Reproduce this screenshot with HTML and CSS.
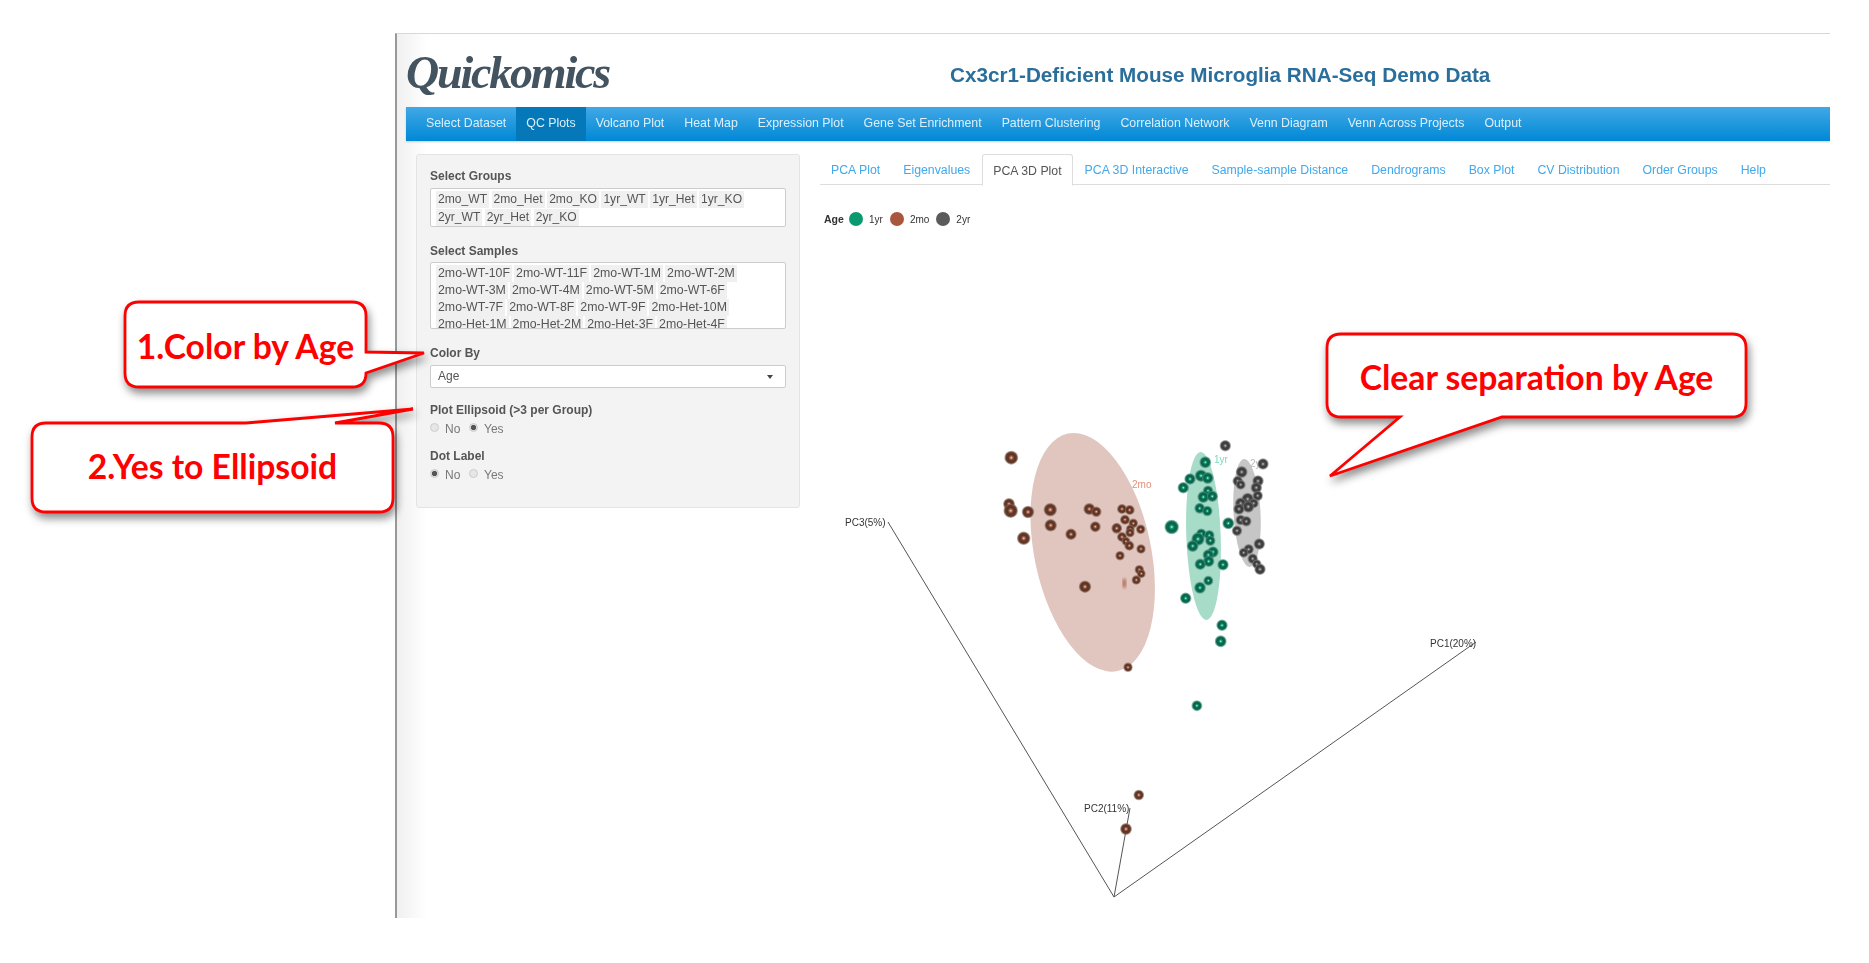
FILE: index.html
```html
<!DOCTYPE html>
<html lang="en">
<head>
  <meta charset="UTF-8" />
  <title>Quickomics</title>
  <link rel="stylesheet" href="styles.css">
</head>
<body>
  <div class="app">
    <header class="top">
      <div class="logo">Quickomics</div>
      <h1 class="title">Cx3cr1-Deficient Mouse Microglia RNA-Seq Demo Data</h1>
    </header>
    <nav class="navbar">
      <a>Select Dataset</a>
      <a class="on">QC Plots</a>
      <a>Volcano Plot</a>
      <a>Heat Map</a>
      <a>Expression Plot</a>
      <a>Gene Set Enrichment</a>
      <a>Pattern Clustering</a>
      <a>Correlation Network</a>
      <a>Venn Diagram</a>
      <a>Venn Across Projects</a>
      <a>Output</a>
    </nav>
    <div class="content">
      <aside class="panel">
        <label class="lbl first">Select Groups</label>
        <div class="multi groups">
          <span>2mo_WT</span><span>2mo_Het</span><span>2mo_KO</span><span>1yr_WT</span><span>1yr_Het</span><span>1yr_KO</span>
          <span>2yr_WT</span><span>2yr_Het</span><span>2yr_KO</span>
        </div>
        <label class="lbl samples-lbl">Select Samples</label>
        <div class="multi samples">
          <span>2mo-WT-10F</span><span>2mo-WT-11F</span><span>2mo-WT-1M</span><span>2mo-WT-2M</span>
          <span>2mo-WT-3M</span><span>2mo-WT-4M</span><span>2mo-WT-5M</span><span>2mo-WT-6F</span>
          <span>2mo-WT-7F</span><span>2mo-WT-8F</span><span>2mo-WT-9F</span><span>2mo-Het-10M</span>
          <span>2mo-Het-1M</span><span>2mo-Het-2M</span><span>2mo-Het-3F</span><span>2mo-Het-4F</span>
        </div>
        <label class="lbl color-lbl">Color By</label>
        <div class="select">Age<i class="caret"></i></div>
        <label class="lbl ell-lbl">Plot Ellipsoid (&gt;3 per Group)</label>
        <div class="radios"><i class="radio"></i><span>No</span><i class="radio sel"></i><span>Yes</span></div>
        <label class="lbl dot-lbl">Dot Label</label>
        <div class="radios"><i class="radio sel"></i><span>No</span><i class="radio"></i><span>Yes</span></div>
      </aside>
      <main class="main">
        <ul class="tabs">
          <li>PCA Plot</li>
          <li>Eigenvalues</li>
          <li class="active">PCA 3D Plot</li>
          <li>PCA 3D Interactive</li>
          <li>Sample-sample Distance</li>
          <li>Dendrograms</li>
          <li>Box Plot</li>
          <li>CV Distribution</li>
          <li>Order Groups</li>
          <li>Help</li>
        </ul>
        <div class="legend">
          <b>Age</b>
          <i class="dot green"></i><span>1yr</span>
          <i class="dot brown"></i><span>2mo</span>
          <i class="dot gray"></i><span>2yr</span>
        </div>
        <svg class="plot" viewBox="820 226 1010 692" width="1010" height="692">
          <defs>
            <radialGradient id="sb"><stop offset="0" stop-color="#f6dccf"/><stop offset=".22" stop-color="#a8674c"/><stop offset=".5" stop-color="#5e3324"/><stop offset=".82" stop-color="#63392a"/><stop offset="1" stop-color="#8a7068"/></radialGradient>
            <radialGradient id="sg"><stop offset="0" stop-color="#d8f6ea"/><stop offset=".22" stop-color="#1f9f79"/><stop offset=".5" stop-color="#05634a"/><stop offset=".82" stop-color="#0a6a50"/><stop offset="1" stop-color="#5f9a88"/></radialGradient>
            <radialGradient id="sk"><stop offset="0" stop-color="#c9c9c9"/><stop offset=".22" stop-color="#707070"/><stop offset=".5" stop-color="#3b3b3b"/><stop offset=".82" stop-color="#424242"/><stop offset="1" stop-color="#808080"/></radialGradient>
            <filter id="smudge"><feGaussianBlur stdDeviation="1.4"/></filter>
          </defs>

          <ellipse cx="1092.7" cy="552.3" rx="58.3" ry="121.3" transform="rotate(-11.8 1092.7 552.3)" fill="#e0c6be"/>
          <ellipse cx="1203.5" cy="536" rx="17.2" ry="84" transform="rotate(-2 1203.5 536)" fill="#a6dcc8"/>
          <ellipse cx="1247" cy="513" rx="13.5" ry="54" transform="rotate(-3 1247 513)" fill="#c6c6c6"/>
          <ellipse cx="1124.3" cy="583.3" rx="1.6" ry="5" fill="#a8604c" filter="url(#smudge)"/>

          <g class="axes">
            <line x1="1114" y1="897" x2="888" y2="522"/>
            <line x1="1114" y1="897" x2="1130" y2="808"/>
            <line x1="1114" y1="897" x2="1476" y2="642"/>
          </g>
          <g class="axis-txt">
            <text x="845" y="526">PC3(5%)</text>
            <text x="1084" y="812">PC2(11%)</text>
            <text x="1430" y="647">PC1(20%)</text>
          </g>
          <text class="grp t-brown" x="1132" y="488">2mo</text>
          <text class="grp t-green" x="1214" y="463">1yr</text>
          <text class="grp t-gray" x="1250" y="467">2y</text>

          <g class="pts-b" fill="url(#sb)">
            <circle cx="1011.3" cy="457.7" r="6.2"/><circle cx="1009" cy="504" r="5.2"/><circle cx="1010.7" cy="510.7" r="6.5"/>
            <circle cx="1028" cy="512" r="5.5"/><circle cx="1050.3" cy="509.7" r="6"/><circle cx="1089.3" cy="509" r="5.2"/>
            <circle cx="1096.3" cy="511.7" r="4.5"/><circle cx="1122" cy="509" r="4.3"/><circle cx="1129.7" cy="510" r="4.3"/>
            <circle cx="1125" cy="519.7" r="4.3"/><circle cx="1133.3" cy="523.3" r="4"/><circle cx="1050.7" cy="525.3" r="5.5"/>
            <circle cx="1095.3" cy="526.7" r="4.7"/><circle cx="1116.7" cy="528.3" r="4.7"/><circle cx="1130.3" cy="529" r="3.7"/>
            <circle cx="1130" cy="532.7" r="4"/><circle cx="1140.7" cy="529.3" r="4"/><circle cx="1071" cy="534.3" r="5"/>
            <circle cx="1023.7" cy="538.3" r="6"/><circle cx="1122" cy="537" r="4.3"/><circle cx="1126" cy="541.3" r="3.7"/>
            <circle cx="1129.3" cy="545.7" r="4.3"/><circle cx="1141" cy="549" r="4"/><circle cx="1120" cy="555.7" r="4"/>
            <circle cx="1139.3" cy="569.7" r="4"/><circle cx="1141.3" cy="573.7" r="3.7"/><circle cx="1136.3" cy="580" r="4"/>
            <circle cx="1085" cy="586.7" r="5.5"/><circle cx="1128" cy="667.3" r="4"/><circle cx="1138.8" cy="795" r="4.6"/>
            <circle cx="1126" cy="829" r="5.2"/>
          </g>
          <g class="pts-g" fill="url(#sg)">
            <circle cx="1205.3" cy="462.3" r="5.2"/><circle cx="1201" cy="475.7" r="5.5"/><circle cx="1207.7" cy="478" r="5.2"/>
            <circle cx="1190" cy="479" r="5"/><circle cx="1183.3" cy="487.7" r="5"/><circle cx="1208" cy="490.7" r="4.5"/>
            <circle cx="1203.3" cy="497" r="5.2"/><circle cx="1212.3" cy="496.3" r="5"/><circle cx="1199.7" cy="508.3" r="4.7"/>
            <circle cx="1207.3" cy="511" r="4.5"/><circle cx="1171.7" cy="527" r="6.5"/><circle cx="1228.3" cy="523.3" r="5.2"/>
            <circle cx="1201.3" cy="533.7" r="4.5"/><circle cx="1209.3" cy="535.3" r="4.5"/><circle cx="1198" cy="539" r="6"/>
            <circle cx="1210.3" cy="540.7" r="4.5"/><circle cx="1192.7" cy="546" r="5.2"/><circle cx="1213" cy="552" r="5"/>
            <circle cx="1208.3" cy="555" r="5"/><circle cx="1208.7" cy="561.3" r="5"/><circle cx="1200.3" cy="564.3" r="5"/>
            <circle cx="1223" cy="564.7" r="5"/><circle cx="1208.3" cy="580.7" r="4.3"/><circle cx="1200" cy="587.7" r="5.2"/>
            <circle cx="1185.7" cy="598.3" r="5"/><circle cx="1222" cy="625.3" r="5"/><circle cx="1220.7" cy="641.3" r="5.2"/>
            <circle cx="1196.9" cy="705.7" r="4.7"/>
          </g>
          <g class="pts-k" fill="url(#sk)">
            <circle cx="1225.3" cy="445.7" r="5"/><circle cx="1263" cy="464" r="5"/><circle cx="1241.7" cy="472" r="5.2"/>
            <circle cx="1237.7" cy="481" r="4.5"/><circle cx="1240.7" cy="484.7" r="4.3"/><circle cx="1258" cy="481" r="5"/>
            <circle cx="1256.3" cy="487.7" r="5"/><circle cx="1257.7" cy="495.7" r="4.5"/><circle cx="1247.7" cy="499" r="5.5"/>
            <circle cx="1240.7" cy="503.3" r="5"/><circle cx="1253.7" cy="503.3" r="4.3"/><circle cx="1248.3" cy="506.7" r="5.2"/>
            <circle cx="1239" cy="509" r="5"/><circle cx="1240.7" cy="520" r="4.5"/><circle cx="1246.3" cy="521.3" r="4.5"/>
            <circle cx="1237" cy="530.7" r="4.5"/><circle cx="1259.3" cy="544" r="5"/><circle cx="1248.7" cy="549.3" r="4.5"/>
            <circle cx="1243.7" cy="552.7" r="4.3"/><circle cx="1252.7" cy="558.7" r="4.5"/><circle cx="1256.7" cy="564" r="4"/>
            <circle cx="1260" cy="569.3" r="5"/>
          </g>
        </svg>
      </main>
    </div>
  </div>

  <!-- red callouts pasted over the screenshot -->
  <div class="callout c1">
    <svg width="241" height="85"><path d="M14 0H227Q241 0 241 14V50L299 51 241 71Q241 85 227 85H14Q0 85 0 71V14Q0 0 14 0Z"/></svg>
    <span>1.Color by Age</span>
  </div>
  <div class="callout c2">
    <svg width="361" height="89"><path d="M14 0H214L381-14 303 0H347Q361 0 361 14V75Q361 89 347 89H14Q0 89 0 75V14Q0 0 14 0Z"/></svg>
    <span>2.Yes to Ellipsoid</span>
  </div>
  <div class="callout c3">
    <svg width="419" height="83"><path d="M14 0H405Q419 0 419 14V69Q419 83 405 83H175L3 142 73 83H14Q0 83 0 69V14Q0 0 14 0Z"/></svg>
    <span>Clear separation by Age</span>
  </div>
</body>
</html>
```

FILE: styles.css
```css
body {
  margin: 0;
  background: #fff;
  font-family: "Liberation Sans", sans-serif;
  color: #555;
  width: 1869px;
  height: 963px;
  overflow: hidden;
  position: relative;
}
.app {
  margin: 33px 0 0 395px;
  width: 1435px;
  height: 885px;
  box-sizing: border-box;
  border-left: 2px solid #999;
  border-top: 1px solid #d8d8d8;
  background: linear-gradient(to right, #f0f0f0, #fff 30px);
  overflow: hidden;
  filter: blur(0.5px);
}
.top {
  height: 73px;
  display: flex;
  align-items: center;
  padding-left: 9px;
}
.logo {
  width: 544px;
  margin-top: 3px;
  font-family: "Liberation Serif", serif;
  font-style: italic;
  font-weight: bold;
  font-size: 46px;
  color: #43535f;
  letter-spacing: -2.2px;
}
.title {
  margin: 8px 0 0 0;
  font-size: 20.7px;
  font-weight: bold;
  color: #2a6f9b;
  white-space: nowrap;
}
.navbar {
  margin-left: 9px;
  height: 34px;
  display: flex;
  padding-left: 10px;
  background: linear-gradient(#41a8e6, #0088d6);
  box-shadow: 0 1px 2px #ccc;
}
.navbar a {
  padding: 0 10px;
  line-height: 32px;
  font-size: 12.35px;
  color: #dceffa;
  white-space: nowrap;
}
.navbar a.on {
  background: #0478b9;
}
.content {
  display: flex;
  padding: 13px 0 0 19px;
}
.panel {
  width: 384px;
  height: 354px;
  box-sizing: border-box;
  padding: 0 13px;
  background: #f3f3f3;
  border: 1px solid #e4e4e4;
  border-radius: 3px;
}
.lbl {
  display: block;
  font-size: 12px;
  font-weight: bold;
  line-height: 14px;
  color: #555;
}
.lbl.first { margin-top: 14px; }
.multi {
  margin-top: 5px;
  background: #fff;
  border: 1px solid #ccc;
  border-radius: 2px;
  padding: 2px 5px;
  display: flex;
  flex-wrap: wrap;
  align-content: flex-start;
  column-gap: 2px;
  overflow: hidden;
  box-sizing: border-box;
  line-height: 17px;
}
.multi span {
  padding: 0 2px;
  background: #f0f0f0;
  color: #555;
  height: 17px;
}
.groups { height: 39px; width: 356px; padding-right: 30px; row-gap: 1px; font-size: 12.1px; column-gap: 2.5px; }
.samples { height: 67px; width: 356px; padding-right: 20px; margin-top: 4px; font-size: 12.35px; }
.samples-lbl { margin-top: 17px; }
.color-lbl { margin-top: 17px; }
.select {
  margin-top: 5px;
  width: 356px;
  height: 23px;
  box-sizing: border-box;
  background: #fff;
  border: 1px solid #ccc;
  border-radius: 2px;
  padding-left: 7px;
  font-size: 12px;
  line-height: 21px;
  display: flex;
  justify-content: space-between;
  align-items: center;
}
.caret {
  margin-right: 12px;
  border-top: 4px solid #444;
  border-left: 3px solid transparent;
  border-right: 3px solid transparent;
}
.ell-lbl { margin-top: 15px; }
.dot-lbl { margin-top: 13px; }
.radios {
  margin-top: 5px;
  display: flex;
  align-items: center;
  font-size: 12px;
  line-height: 14px;
  color: #777;
}
.radios span { margin-left: 6px; width: 24px; }
.radio {
  width: 7px;
  height: 7px;
  margin: -3px 0 0 0;
  border-radius: 50%;
  border: 1px solid #ccc;
  background: #e6e6e6;
  box-sizing: content-box;
}
.radio.sel {
  background: radial-gradient(#555 45%, #ddd 60%);
}
.main {
  margin-left: 20px;
  width: 1010px;
}
.tabs {
  margin: 0;
  padding: 0;
  list-style: none;
  display: flex;
  height: 30px;
  border-bottom: 1px solid #ddd;
  font-size: 12.3px;
}
.tabs li {
  padding: 0 11px;
  margin-right: 1px;
  line-height: 33px;
  color: #41a9ec;
  white-space: nowrap;
}
.tabs li.active {
  height: 30px;
  color: #555;
  background: #fff;
  border: 1px solid #ddd;
  border-bottom: 1px solid #fff;
  border-radius: 3px 3px 0 0;
  padding: 0 10px;
  box-sizing: content-box;
}
.legend {
  margin-top: 27px;
  padding-left: 4px;
  height: 14px;
  display: flex;
  align-items: center;
  font-size: 10px;
  color: #333;
}
.legend b { width: 21px; font-size: 10.5px; }
.legend span { margin-left: 6px; }
.legend .dot {
  width: 14px;
  height: 14px;
  border-radius: 50%;
  margin-left: 7px;
}
.legend b + .dot { margin-left: 4px; }
.dot.green { background: #0b9a70; }
.dot.brown { background: #a9563f; }
.dot.gray { background: #5b5b5b; }
.plot { display: block; }
.axes line { stroke: #555; stroke-width: 1; }
.axis-txt text { font-size: 10px; fill: #333; }
.grp { font-size: 10px; }
.t-brown { fill: #e5917c; }
.t-green { fill: #7adcb9; }
.t-gray { fill: #bbb; }
.pts-b circle { stroke: #7a5648; stroke-opacity: 0.5; stroke-width: 1.5; }
.pts-g circle { stroke: #2f8069; stroke-opacity: 0.5; stroke-width: 1.5; }
.pts-k circle { stroke: #666; stroke-opacity: 0.5; stroke-width: 1.5; }

.callout {
  position: absolute;
  display: flex;
  align-items: center;
  justify-content: center;
  font-family: Lato, sans-serif;
  font-weight: bold;
  font-size: 33.7px;
  color: #f00;
}
.callout svg {
  position: absolute;
  left: 0;
  top: 0;
  overflow: visible;
  filter: drop-shadow(2px 5px 4px rgba(0, 0, 0, 0.45));
}
.callout path {
  fill: #fff;
  stroke: #f00;
  stroke-width: 2.8;
  stroke-linejoin: miter;
}
.callout span { position: relative; white-space: nowrap; }
.c1 { left: 125px; top: 302px; width: 241px; height: 85px; padding-top: 2px; box-sizing: border-box; }
.c2 { left: 32px; top: 423px; width: 361px; height: 89px; padding-bottom: 3px; box-sizing: border-box; }
.c3 { left: 1327px; top: 334px; width: 419px; height: 83px; padding-top: 2px; box-sizing: border-box; }
```
